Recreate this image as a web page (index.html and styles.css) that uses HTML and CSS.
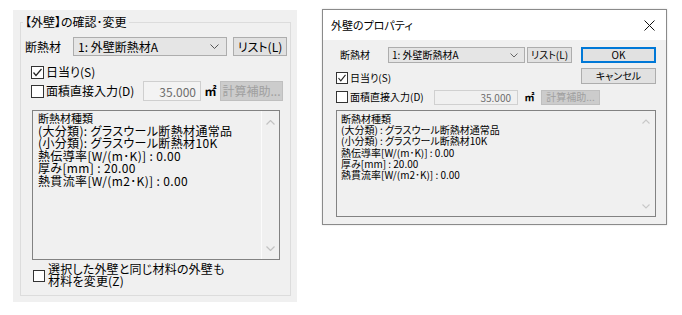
FILE: index.html
```html
<!DOCTYPE html>
<html lang="ja">
<head>
<meta charset="utf-8">
<title>外壁のプロパティ</title>
<link rel="stylesheet" href="styles.css">
</head>
<body>
<div class="page">
  <section class="panel">
    <fieldset class="group">
      <legend class="group-title">【外壁】の確認･変更</legend>
      <div class="row row1">
        <span class="lbl">断熱材</span>
        <div class="combo"><span class="combo-text">1: 外壁断熱材A</span>
          <svg class="chev" width="9" height="5" viewBox="0 0 9 5"><polyline points="0.5,0.5 4.5,4.5 8.5,0.5" fill="none" stroke="#555" stroke-width="1"/></svg>
        </div>
        <div class="btn btn-list">リスト(L)</div>
      </div>
      <div class="row row2">
        <span class="cb checked"><svg width="11" height="11" viewBox="0 0 11 11"><polyline points="1.5,5.5 4,8.5 9.5,2" fill="none" stroke="#222" stroke-width="1.2"/></svg></span>
        <span class="cb-text">日当り(S)</span>
      </div>
      <div class="row row3">
        <div class="cb-wrap"><span class="cb"></span><span class="cb-text">面積直接入力(D)</span></div>
        <div class="num">35.000</div>
        <span class="unit">㎡</span>
        <div class="btn btn-dis">計算補助...</div>
      </div>
      <div class="memo">
        <div class="memo-text">
          <div class="l1">断熱材種類</div>
          <div>(大分類): グラスウール断熱材通常品</div>
          <div>(小分類): グラスウール断熱材10K</div>
          <div>熱伝導率[W/(m･K)] : 0.00</div>
          <div>厚み[mm] : 20.00</div>
          <div>熱貫流率[W/(m2･K)] : 0.00</div>
        </div>
        <div class="sbar">
          <svg width="9" height="5" viewBox="0 0 9 5"><polyline points="0.5,4.5 4.5,0.5 8.5,4.5" fill="none" stroke="#c2c2c2" stroke-width="1.2"/></svg>
          <svg width="9" height="5" viewBox="0 0 9 5"><polyline points="0.5,0.5 4.5,4.5 8.5,0.5" fill="none" stroke="#c2c2c2" stroke-width="1.2"/></svg>
        </div>
      </div>
      <div class="row row4">
        <span class="cb cb-small"></span>
        <span class="cb-text two">選択した外壁と同じ材料の外壁も<br>材料を変更(Z)</span>
      </div>
    </fieldset>
  </section>

  <section class="dlg">
    <header class="titlebar">
      <span class="title">外壁のプロパティ</span>
      <svg class="close" width="11" height="11" viewBox="0 0 11 11"><path d="M0.5 0.5 L10.5 10.5 M10.5 0.5 L0.5 10.5" stroke="#111" stroke-width="1"/></svg>
    </header>
    <div class="dbody">
      <div class="drow drow1">
        <span class="dlbl">断熱材</span>
        <div class="dcombo"><span>1: 外壁断熱材A</span>
          <svg width="8" height="5" viewBox="0 0 8 5"><polyline points="0.5,0.5 4,4 7.5,0.5" fill="none" stroke="#666" stroke-width="1"/></svg>
        </div>
        <div class="dbtn dbtn-list">リスト(L)</div>
        <div class="dbtn dbtn-ok">OK</div>
      </div>
      <div class="drow drow2">
        <div class="dcb-wrap">
          <span class="dcb"><svg width="10" height="10" viewBox="0 0 10 10"><polyline points="1.5,5 3.8,7.8 8.5,1.8" fill="none" stroke="#222" stroke-width="1.1"/></svg></span>
          <span class="dcb-text">日当り(S)</span>
        </div>
        <div class="dbtn dbtn-cancel">キャンセル</div>
      </div>
      <div class="drow drow3">
        <div class="dcb-wrap wide"><span class="dcb"></span><span class="dcb-text">面積直接入力(D)</span></div>
        <div class="dnum">35.000</div>
        <span class="dunit">㎡</span>
        <div class="dbtn dbtn-dis">計算補助...</div>
      </div>
      <div class="dmemo">
        <div class="dmemo-text">
          <div>断熱材種類</div>
          <div>(大分類) : グラスウール断熱材通常品</div>
          <div>(小分類) : グラスウール断熱材10K</div>
          <div>熱伝導率[W/(m･K)] : 0.00</div>
          <div>厚み[mm] : 20.00</div>
          <div>熱貫流率[W/(m2･K)] : 0.00</div>
        </div>
        <div class="dsbar">
          <svg width="8" height="5" viewBox="0 0 8 5"><polyline points="0.5,4.5 4,1 7.5,4.5" fill="none" stroke="#c8c8c8" stroke-width="1.1"/></svg>
          <svg width="8" height="5" viewBox="0 0 8 5"><polyline points="0.5,0.5 4,4 7.5,0.5" fill="none" stroke="#c8c8c8" stroke-width="1.1"/></svg>
        </div>
      </div>
    </div>
  </section>
</div>
</body>
</html>
```
FILE: styles.css
```css
* { box-sizing: border-box; }
html, body { margin: 0; padding: 0; background: #fff; }
body {
  font-family: "Noto Sans CJK JP", "Noto Sans", sans-serif;
  font-feature-settings: "palt";
  color: #000;
}
.page {
  display: flex;
  align-items: flex-start;
  padding: 9px 0 0 13px;
  gap: 25px;
}

/* ---------- left panel ---------- */
.panel {
  width: 284px;
  height: 292px;
  margin-top: 1px;
  background: #f0f0f0;
  padding: 5px 6px 6px 7px;
  font-size: 12px;
  line-height: 14px;
}
.group {
  margin: 0;
  height: 100%;
  border: 1px solid #dcdcdc;
  padding: 0 2px 0 4px;
  min-width: 0;
}
.group-title {
  padding: 0 2px;
  margin-left: -2px;
  line-height: 14px;
  font-weight: normal;
}
.row { display: flex; align-items: center; }
.row1 { height: 19px; margin-top: 8px; }
.lbl { width: 48px; }
.combo {
  width: 154px;
  height: 19px;
  border: 1px solid #adadad;
  background: #e5e5e5;
  display: flex;
  align-items: center;
  justify-content: space-between;
  padding: 0 7px 0 4px;
}
.btn {
  height: 19px;
  border: 1px solid #adadad;
  background: #e1e1e1;
  display: flex;
  align-items: center;
  justify-content: center;
}
.btn-list { width: 54px; margin-left: 6px; }
.row2 { height: 16px; margin-top: 8px; padding-left: 6px; }
.cb {
  width: 13px;
  height: 13px;
  border: 1px solid #333;
  background: #fff;
  display: inline-flex;
  align-items: center;
  justify-content: center;
  flex: none;
}
.cb-text { margin-left: 2px; }
.row3 { height: 20px; margin-top: 1px; }
.cb-wrap { width: 118px; padding-left: 6px; display: flex; align-items: center; }
.num {
  width: 58px;
  height: 20px;
  border: 1px solid #cfcfcf;
  background: #f3f3f3;
  color: #6d6d6d;
  text-align: right;
  padding: 2px 4px 0 0;
  line-height: 15px;
}
.unit { width: 19px; text-align: center; font-size: 12px; font-weight: bold; }
.btn-dis {
  width: 63px;
  height: 20px;
  background: #cccccc;
  border-color: #bfbfbf;
  color: #a0a0a0;
}
.memo {
  margin: 9px 0 0 7px;
  width: 248px;
  height: 150px;
  border: 1px solid #828282;
  display: flex;
  background: #f0f0f0;
}
.memo-text {
  flex: 1;
  padding: 1px 0 0 5px;
  line-height: 12.5px;
  font-size: 12px;
  letter-spacing: 0.35px;
  white-space: nowrap;
}
.memo-text .l1 { font-size: 11px; letter-spacing: 0; }
.sbar {
  width: 18px;
  border-left: 1px solid #fbfbfb;
  display: flex;
  flex-direction: column;
  justify-content: space-between;
  align-items: center;
  padding: 9px 0 8px;
}
.row4 { margin-top: 3px; padding-left: 8px; align-items: center; }
.cb-small { width: 12px; height: 12px; margin-top: 2px; }
.two { line-height: 12px; margin-left: 3px; letter-spacing: 0.2px; }

/* ---------- right dialog ---------- */
.dlg {
  width: 345px;
  height: 216px;
  border: 1px solid #8a8a8a;
  background: #f0f0f0;
  display: flex;
  flex-direction: column;
  font-size: 10px;
  line-height: 12px;
  box-shadow: 0 0 2px rgba(0,0,0,0.15);
}
.titlebar {
  height: 30px;
  background: #fff;
  display: flex;
  align-items: center;
  justify-content: space-between;
  padding: 0 11px 0 8px;
  flex: none;
}
.title { font-size: 11px; }
.dbody { padding: 7px 10px 0 13px; }
.drow { display: flex; align-items: center; }
.drow1 { height: 16px; }
.dlbl { width: 52px; padding-left: 4px; }
.dcombo {
  width: 137px;
  height: 16px;
  border: 1px solid #adadad;
  background: #e5e5e5;
  display: flex;
  align-items: center;
  justify-content: space-between;
  padding: 0 6px 0 3px;
}
.dbtn {
  height: 16px;
  border: 1px solid #adadad;
  background: #e1e1e1;
  display: flex;
  align-items: center;
  justify-content: center;
}
.dbtn-list { width: 45px; margin-left: 2px; }
.dbtn-ok { width: 75px; margin-left: 9px; border: 2px solid #0078d7; }
.drow2 { height: 16px; margin-top: 5px; justify-content: space-between; align-items: flex-end; }
.dbtn-cancel { width: 75px; }
.dcb-wrap { display: flex; align-items: center; }
.dcb {
  width: 12px;
  height: 12px;
  border: 1px solid #333;
  background: #fff;
  display: inline-flex;
  align-items: center;
  justify-content: center;
  flex: none;
}
.dcb-text { margin-left: 2px; }
.drow3 { height: 14px; margin-top: 6px; }
.wide { width: 98px; }
.dnum {
  width: 84px;
  height: 15px;
  border: 1px solid #d0d0d0;
  background: #f0f0f0;
  color: #6d6d6d;
  text-align: right;
  padding-right: 6px;
  line-height: 13px;
}
.dunit { width: 23px; text-align: center; font-weight: bold; }
.dbtn-dis {
  width: 59px;
  height: 15px;
  background: #cccccc;
  border-color: #bfbfbf;
  color: #a0a0a0;
}
.dmemo {
  margin-top: 6px;
  width: 320px;
  height: 107px;
  border: 1px solid #828282;
  display: flex;
}
.dmemo-text {
  flex: 1;
  padding: 2px 0 0 4px;
  line-height: 11.2px;
  white-space: nowrap;
}
.dsbar {
  width: 18px;
  display: flex;
  flex-direction: column;
  justify-content: space-between;
  align-items: center;
  padding: 8px 0 7px;
}
```
